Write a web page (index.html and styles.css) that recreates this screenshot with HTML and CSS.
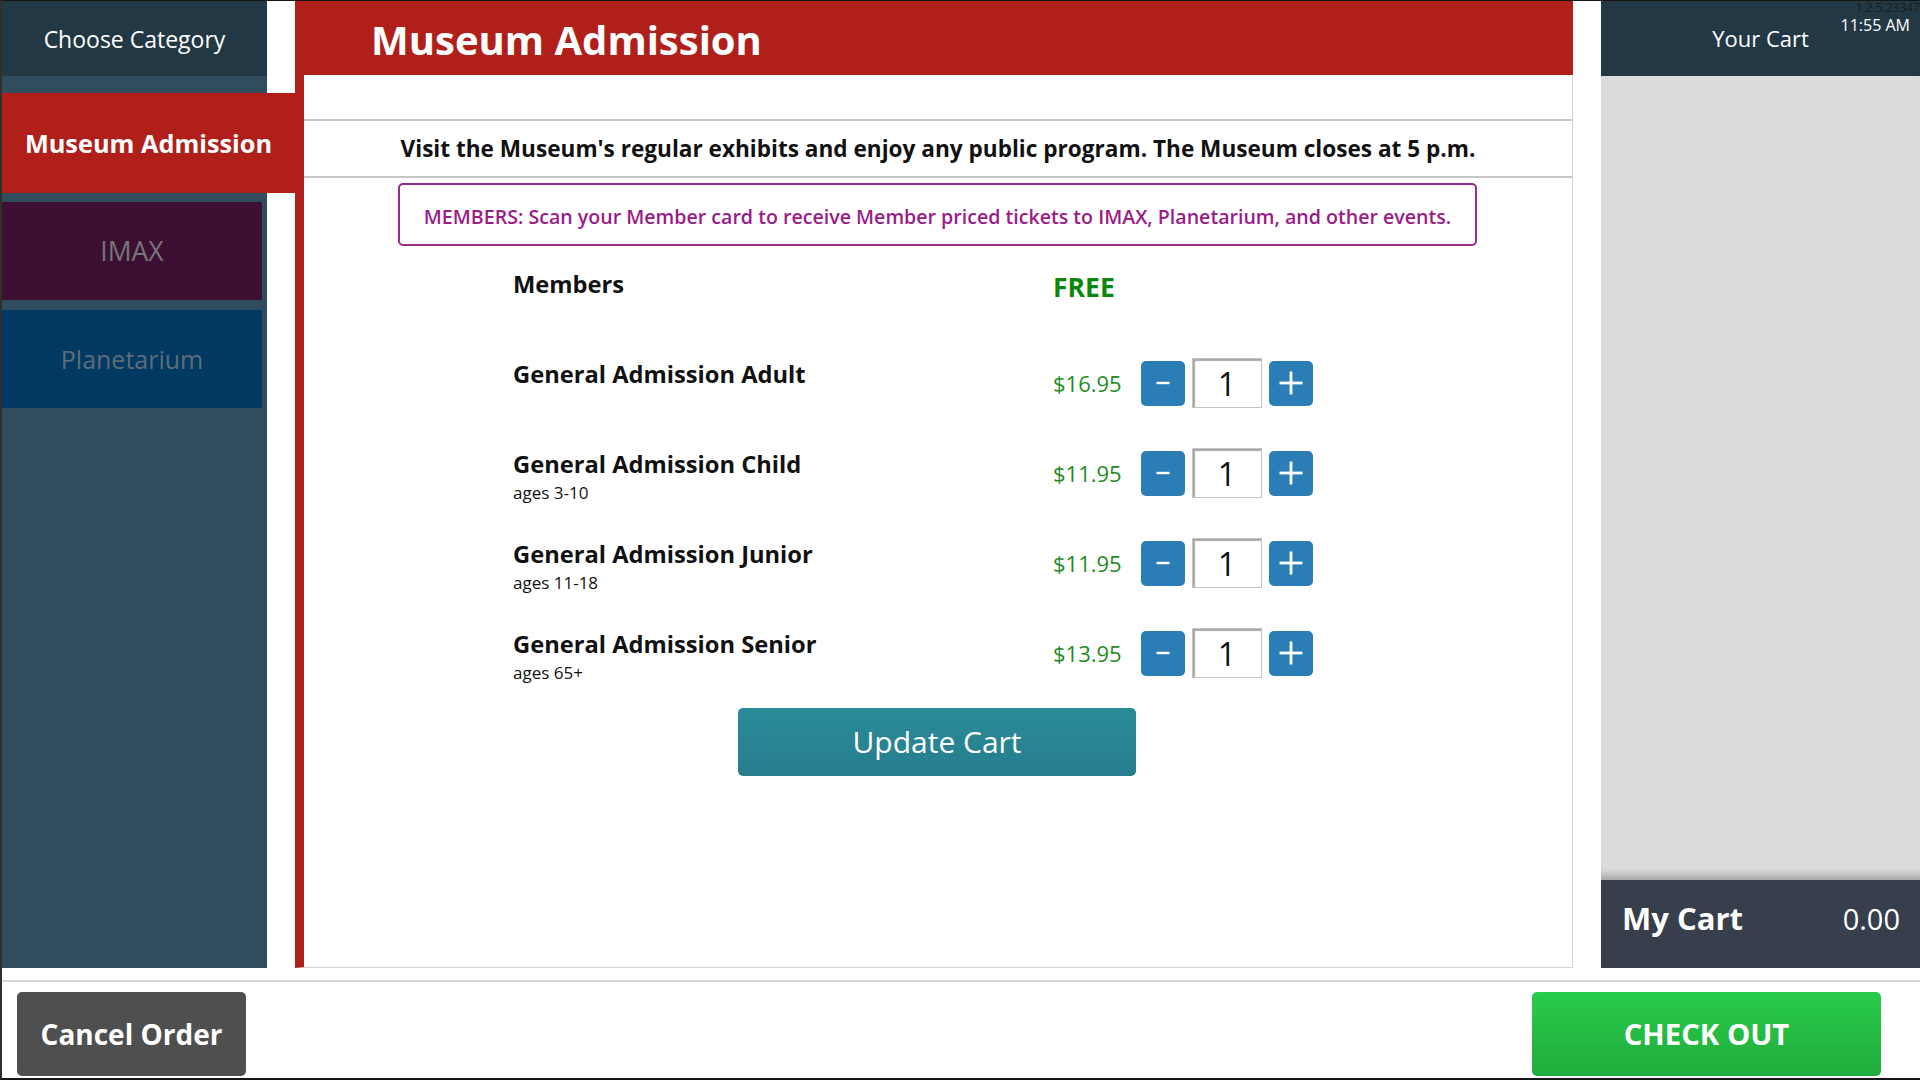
FILE: index.html
```html
<!DOCTYPE html>
<html lang="en">
<head>
    <meta charset="UTF-8">
    <meta name="viewport" content="width=device-width, initial-scale=1.0">
    <title>Museum Admission</title>
    <link rel="stylesheet" href="styles.css">
</head>
<body>
<div class="app">
    <div class="main-area">

        <!-- Categories -->
        <aside class="sidebar">
            <div class="side-head">Choose Category</div>
            <div class="cats">
                <div class="cat active">Museum Admission</div>
                <div class="cat imax">IMAX</div>
                <div class="cat planet">Planetarium</div>
            </div>
        </aside>

        <!-- Ticket panel -->
        <main class="panel">
            <div class="panel-head"><h1>Museum Admission</h1></div>
            <div class="panel-body">
                <p class="desc">Visit the Museum's regular exhibits and enjoy any public program. The Museum closes at 5 p.m.</p>
                <div class="notice">MEMBERS: Scan your Member card to receive Member priced tickets to IMAX, Planetarium, and other events.</div>

                <div class="tickets">
                    <div class="row">
                        <div class="name">Members</div>
                        <div class="price free">FREE</div>
                    </div>
                    <div class="row">
                        <div class="name">General Admission Adult</div>
                        <div class="price">$16.95</div>
                        <div class="qty">
                            <button class="step"><svg width="16" height="4" viewBox="0 0 16 4"><rect x="1.5" y="0.8" width="13" height="2.4" fill="#fff"/></svg></button>
                            <div class="count">1</div>
                            <button class="step"><svg width="24" height="24" viewBox="0 0 24 24"><rect x="0.5" y="10.6" width="23" height="2.8" fill="#fff"/><rect x="10.6" y="0.5" width="2.8" height="23" fill="#fff"/></svg></button>
                        </div>
                    </div>
                    <div class="row">
                        <div class="name">General Admission Child<small>ages 3-10</small></div>
                        <div class="price">$11.95</div>
                        <div class="qty">
                            <button class="step"><svg width="16" height="4" viewBox="0 0 16 4"><rect x="1.5" y="0.8" width="13" height="2.4" fill="#fff"/></svg></button>
                            <div class="count">1</div>
                            <button class="step"><svg width="24" height="24" viewBox="0 0 24 24"><rect x="0.5" y="10.6" width="23" height="2.8" fill="#fff"/><rect x="10.6" y="0.5" width="2.8" height="23" fill="#fff"/></svg></button>
                        </div>
                    </div>
                    <div class="row">
                        <div class="name">General Admission Junior<small>ages 11-18</small></div>
                        <div class="price">$11.95</div>
                        <div class="qty">
                            <button class="step"><svg width="16" height="4" viewBox="0 0 16 4"><rect x="1.5" y="0.8" width="13" height="2.4" fill="#fff"/></svg></button>
                            <div class="count">1</div>
                            <button class="step"><svg width="24" height="24" viewBox="0 0 24 24"><rect x="0.5" y="10.6" width="23" height="2.8" fill="#fff"/><rect x="10.6" y="0.5" width="2.8" height="23" fill="#fff"/></svg></button>
                        </div>
                    </div>
                    <div class="row">
                        <div class="name">General Admission Senior<small>ages 65+</small></div>
                        <div class="price">$13.95</div>
                        <div class="qty">
                            <button class="step"><svg width="16" height="4" viewBox="0 0 16 4"><rect x="1.5" y="0.8" width="13" height="2.4" fill="#fff"/></svg></button>
                            <div class="count">1</div>
                            <button class="step"><svg width="24" height="24" viewBox="0 0 24 24"><rect x="0.5" y="10.6" width="23" height="2.8" fill="#fff"/><rect x="10.6" y="0.5" width="2.8" height="23" fill="#fff"/></svg></button>
                        </div>
                    </div>
                </div>

                <button class="update">Update Cart</button>
            </div>
        </main>

        <!-- Cart -->
        <section class="cart">
            <div class="cart-head">
                Your Cart
                <span class="version">1.2.5.23347</span>
                <span class="clock">11:55 AM</span>
            </div>
            <div class="cart-body"></div>
            <div class="cart-total">
                <span class="label">My Cart</span>
                <span class="amount">0.00</span>
            </div>
        </section>
    </div>

    <footer class="bottom">
        <button class="cancel">Cancel Order</button>
        <button class="checkout">CHECK OUT</button>
    </footer>
</div>
</body>
</html>
```

FILE: styles.css
```css
body, html {
    margin: 0;
    padding: 0;
    height: 100%;
    overflow: hidden;
    font-family: 'Open Sans', 'Noto Sans', sans-serif;
}
button {
    font-family: inherit;
    cursor: pointer;
}
.app {
    height: 1080px;
    box-sizing: border-box;
    border-top: 1px solid #151515;
    border-left: 2px solid #2f2f2f;
    border-bottom: 2px solid #151515;
    background-color: #fff;
    display: flex;
    flex-direction: column;
}
.main-area {
    height: 967px;
    display: grid;
    grid-template-columns: 265px 1278px 319px;
    column-gap: 28px;
}

/* sidebar */
.sidebar {
    background-color: #304c5d;
    display: flex;
    flex-direction: column;
}
.side-head {
    height: 75px;
    background-color: #233845;
    color: #fff;
    font-size: 23px;
    display: flex;
    align-items: center;
    justify-content: center;
}
.cats {
    padding-top: 17px;
}
.cat {
    height: 98px;
    margin: 0 5px 10px 0;
    display: flex;
    align-items: center;
    justify-content: center;
    font-size: 25px;
}
.cat.active {
    height: 100px;
    margin: 0 -28px 9px 0;
    background-color: #b01f1a;
    color: #fff;
    font-weight: bold;
    font-size: 25.3px;
}
.cat.imax {
    background-color: #3c0f33;
    color: #767676;
    font-size: 26.5px;
}
.cat.planet {
    background-color: #003a63;
    color: #5f6c78;
}

/* ticket panel */
.panel {
    display: flex;
    flex-direction: column;
}
.panel-head {
    height: 74px;
    background-color: #b01f1a;
}
.panel-head h1 {
    margin: 0;
    padding-left: 76px;
    line-height: 78px;
    font-size: 40px;
    color: #fff;
}
.panel-body {
    flex: 1;
    border-left: 9px solid #b01f1a;
    border-right: 1px solid #d2d2d2;
    border-bottom: 1px solid #d2d2d2;
    padding-top: 44px;
}
.desc {
    margin: 0;
    height: 55px;
    border-top: 2px solid #c6c6c6;
    border-bottom: 2px solid #c6c6c6;
    display: flex;
    align-items: center;
    justify-content: center;
    font-size: 22.6px;
    font-weight: bold;
    color: #111;
}
.notice {
    box-sizing: border-box;
    width: 1079px;
    height: 63px;
    margin: 5px auto 0 94px;
    padding-top: 3px;
    border: 2px solid #9a2a8c;
    border-radius: 5px;
    display: flex;
    align-items: center;
    justify-content: center;
    color: #9b1b88;
    font-size: 19.6px;
    font-weight: 600;
}
.tickets {
    margin-top: 22px;
    padding-left: 209px;
    display: flex;
    flex-direction: column;
    gap: 40px;
}
.row {
    height: 50px;
    display: grid;
    grid-template-columns: 540px 88px auto;
    align-items: start;
}
.name {
    padding-top: 2px;
    font-size: 23.7px;
    font-weight: bold;
    line-height: 28px;
    color: #111;
}
.name small {
    display: block;
    margin-top: 3px;
    font-size: 17px;
    font-weight: normal;
    line-height: 23px;
}
.price {
    line-height: 50px;
    font-size: 22px;
    color: #1f8c1f;
}
.price.free {
    line-height: 38px;
    font-size: 26.5px;
    font-weight: bold;
    color: #0b870b;
}
.qty {
    display: flex;
    align-items: center;
    gap: 7px;
    height: 50px;
}
.step {
    width: 44px;
    height: 45px;
    padding: 0;
    border: none;
    border-radius: 5px;
    background-color: #2a7db5;
    display: flex;
    align-items: center;
    justify-content: center;
}
.count {
    box-sizing: border-box;
    width: 70px;
    height: 50px;
    border: 1px solid #c4c4c4;
    box-shadow: inset 2px 2px 1px #a8a8a8;
    display: flex;
    align-items: center;
    justify-content: center;
    font-size: 32px;
    color: #111;
}
.update {
    display: block;
    width: 398px;
    height: 68px;
    margin: 30px 0 0 434px;
    padding-bottom: 3px;
    border: none;
    border-radius: 5px;
    background: linear-gradient(#2a8b98, #277d8e);
    color: #fff;
    font-size: 30px;
}

/* cart */
.cart {
    display: flex;
    flex-direction: column;
}
.cart-head {
    position: relative;
    height: 75px;
    padding-bottom: 2px;
    box-sizing: border-box;
    background-color: #233845;
    color: #fff;
    font-size: 22px;
    display: flex;
    align-items: center;
    justify-content: center;
}
.version {
    position: absolute;
    top: -2px;
    right: 0;
    font-size: 12px;
    color: #1c1c1c;
}
.clock {
    position: absolute;
    top: 13px;
    right: 10px;
    font-size: 16px;
    color: #fff;
}
.cart-body {
    flex: 1;
    background-color: #dcdcdc;
    box-shadow: inset 0 -12px 10px -8px rgba(0, 0, 0, 0.3);
}
.cart-total {
    height: 88px;
    box-sizing: border-box;
    padding: 0 20px 12px 21px;
    background-color: #363f4b;
    color: #fff;
    display: flex;
    align-items: center;
    justify-content: space-between;
}
.cart-total .label {
    font-size: 31px;
    font-weight: bold;
}
.cart-total .amount {
    font-size: 29px;
}

/* bottom buttons */
.bottom {
    margin-top: 12px;
    border-top: 2px solid #d6d6d6;
    padding: 10px 39px 0 15px;
    display: flex;
    justify-content: space-between;
}
.cancel, .checkout {
    height: 84px;
    border: none;
    border-radius: 5px;
    color: #fff;
    font-size: 28px;
    font-weight: bold;
}
.cancel {
    width: 229px;
    background-color: #4f4f4f;
}
.checkout {
    width: 349px;
    background: linear-gradient(#29cc4d, #1fab3a);
    font-size: 29.3px;
}
```
